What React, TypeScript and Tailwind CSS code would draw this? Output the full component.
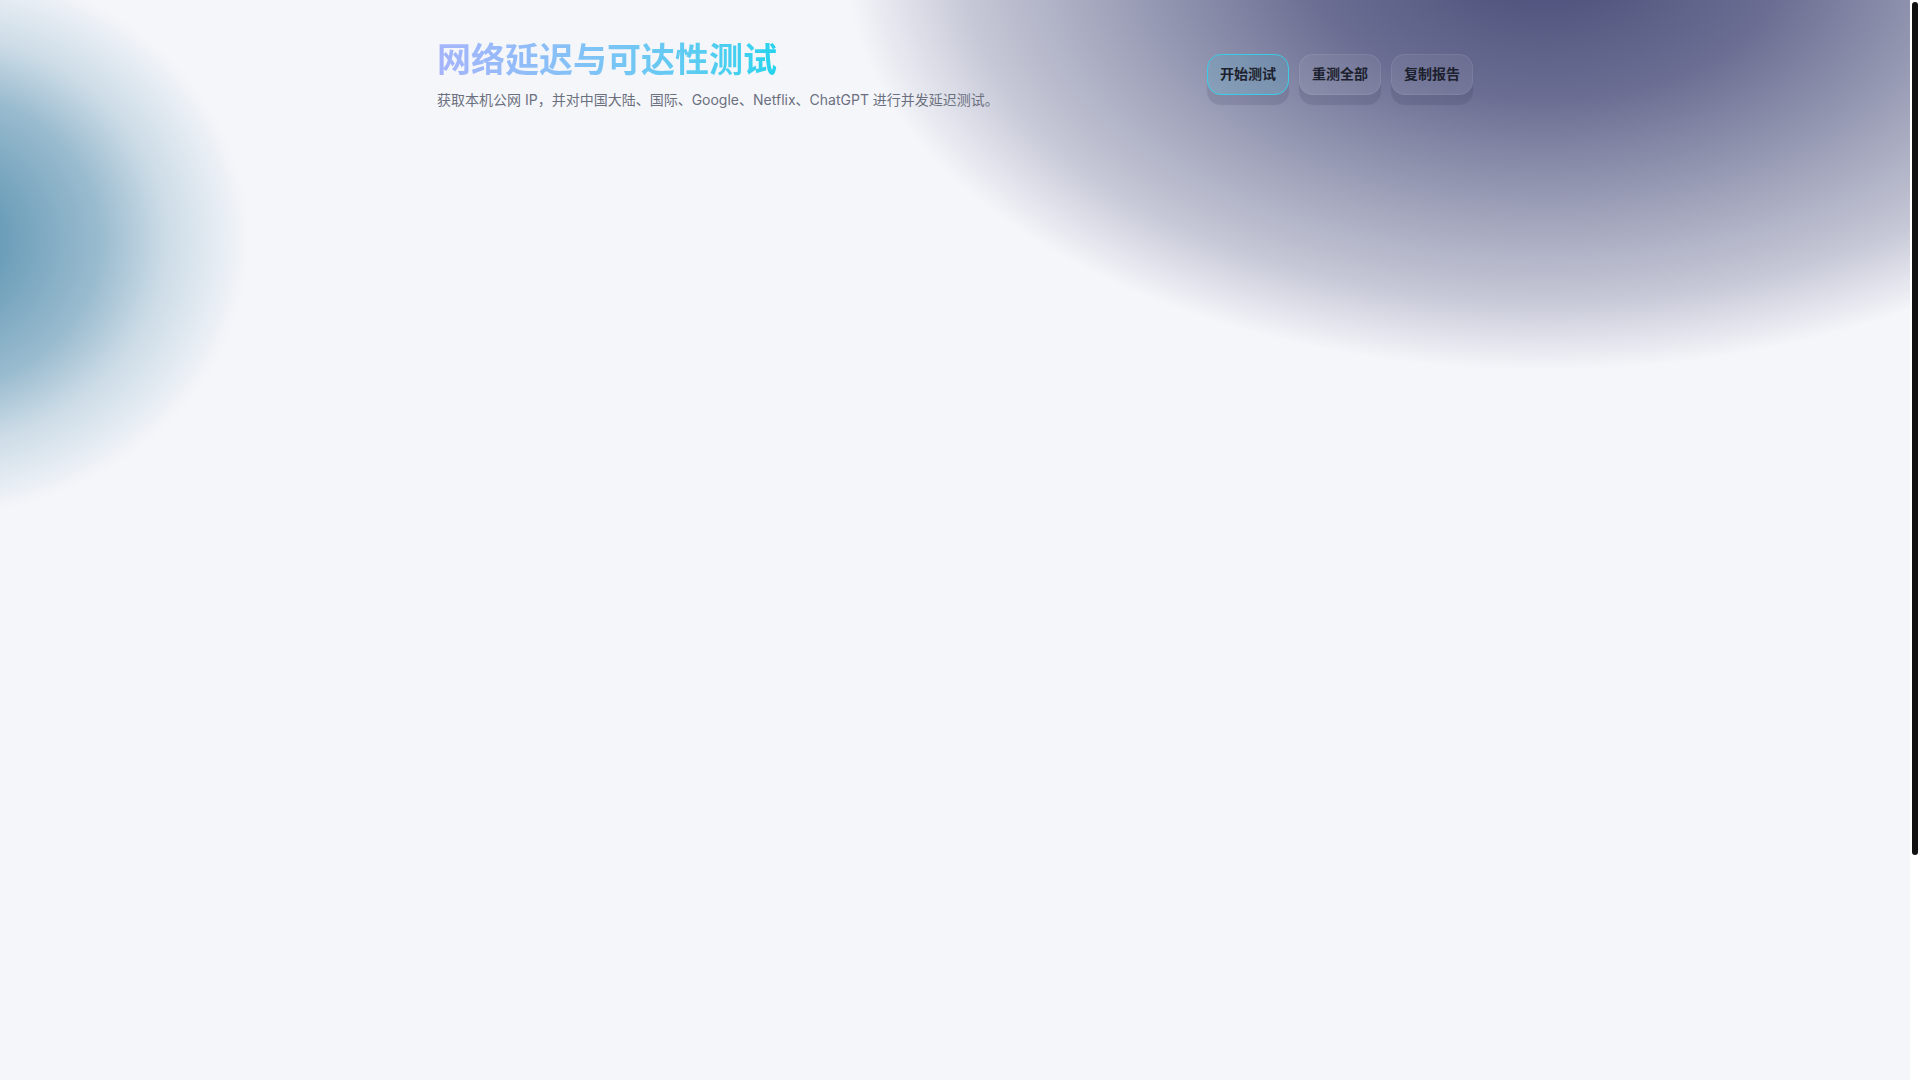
const actions = [
  { label: "开始测试", primary: true },
  { label: "重测全部", primary: false },
  { label: "复制报告", primary: false },
];

export default function App() {
  return (
    <div className="flex h-screen bg-white font-['Inter','Noto_Sans_CJK_SC',sans-serif]">
      {/* scrolling page with the two soft background blobs */}
      <main className="flex-1 overflow-y-auto bg-[#f5f6fa] [scrollbar-width:none]">
        <div className="min-h-[1367px] bg-no-repeat bg-[radial-gradient(ellipse_700px_410px_at_1545px_-40px,rgba(72,76,120,1)_0%,rgba(72,76,120,0.8)_34%,rgba(72,76,120,0.53)_59%,rgba(72,76,120,0.27)_83%,rgba(72,76,120,0)_100%),radial-gradient(ellipse_330px_280px_at_-80px_240px,rgba(80,140,172,1)_0%,rgba(80,140,172,0.84)_24%,rgba(80,140,172,0.55)_55%,rgba(80,140,172,0.25)_74%,rgba(80,140,172,0.06)_94%,rgba(80,140,172,0)_100%)]">
          <header className="mx-auto flex max-w-[1100px] items-center justify-between px-8 pt-[39px]">
            <div>
              <h1 className="w-fit bg-gradient-to-r from-[#a5b4fc] to-[#22d3ee] bg-clip-text text-[34px] font-bold leading-[1.25] text-transparent">
                网络延迟与可达性测试
              </h1>
              <p className="mt-2 text-sm leading-5 text-[#6b7080]">
                获取本机公网 IP，并对中国大陆、国际、Google、Netflix、ChatGPT 进行并发延迟测试。
              </p>
            </div>

            <div className="flex items-center gap-2.5">
              {actions.map((a) =>
                a.primary ? (
                  <button
                    key={a.label}
                    className="h-[41px] rounded-[14px] border border-[#3ccbe6] bg-[rgba(34,211,238,0.12)] px-3 text-sm font-semibold text-[#1c1f2e] shadow-[0_10px_1px_rgba(30,30,70,0.13)]"
                  >
                    {a.label}
                  </button>
                ) : (
                  <button
                    key={a.label}
                    className="h-[41px] rounded-[14px] border border-[rgba(255,255,255,0.08)] bg-[rgba(255,255,255,0.06)] px-3 text-sm font-semibold text-[#1c1f2e] shadow-[0_10px_1px_rgba(30,30,70,0.13)]"
                  >
                    {a.label}
                  </button>
                )
              )}
            </div>
          </header>
        </div>
      </main>

      {/* scrollbar track */}
      <aside className="w-[10px] shrink-0 bg-white pt-[2px] pl-[2px]">
        <div className="h-[853px] w-[6px] rounded-full bg-[#111]" />
      </aside>
    </div>
  );
}
